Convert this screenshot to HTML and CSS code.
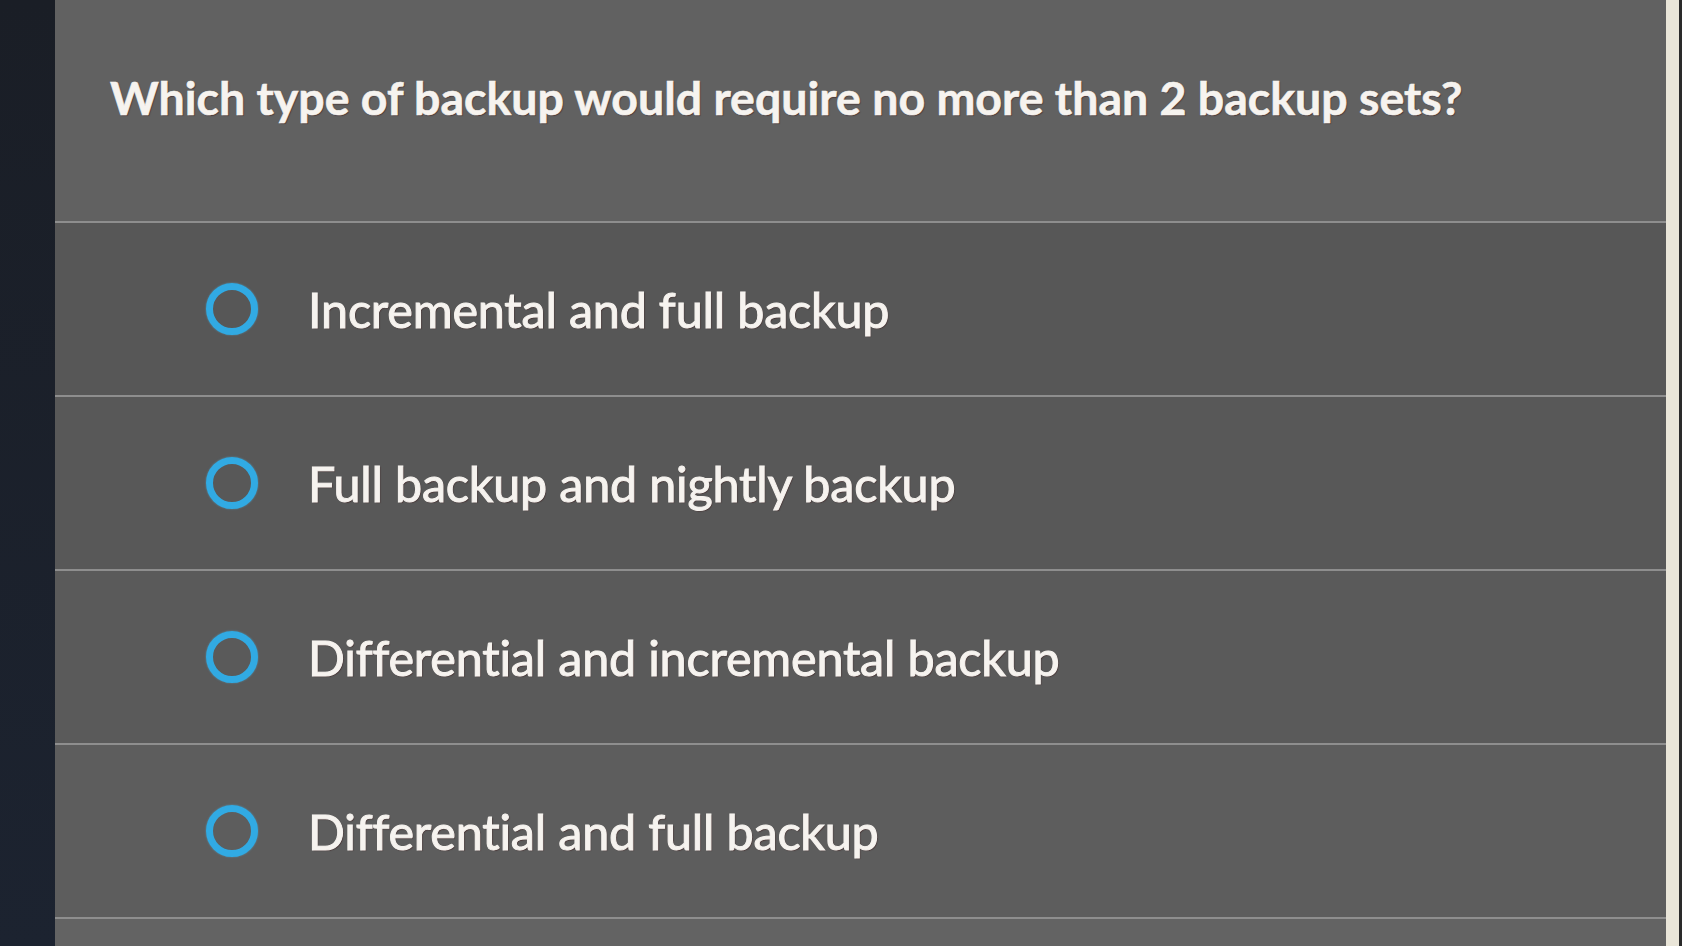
FILE: index.html
```html
<!DOCTYPE html>
<html lang="en">
<head>
<meta charset="utf-8">
<title>Backup question</title>
<link rel="stylesheet" href="styles.css">
</head>
<body>
<div class="screen">
  <div class="bezel-left"></div>
  <main class="quiz">
    <header class="question">
      <h1 class="question-text">Which type of backup would require no more than 2 backup sets?</h1>
    </header>
    <ul class="options">
      <li class="option option-1"><span class="radio"></span><span class="label">Incremental and full backup</span></li>
      <li class="option option-2"><span class="radio"></span><span class="label">Full backup and nightly backup</span></li>
      <li class="option option-3"><span class="radio"></span><span class="label">Differential and incremental backup</span></li>
      <li class="option option-4"><span class="radio"></span><span class="label">Differential and full backup</span></li>
      <li class="option option-rest"></li>
    </ul>
  </main>
  <div class="bezel-right"></div>
</div>
</body>
</html>
```

FILE: styles.css
```css
* { box-sizing: border-box; }
html, body {
  margin: 0;
  padding: 0;
  width: 1682px;
  height: 946px;
  overflow: hidden;
  background: #1b2029;
}
.screen {
  display: flex;
  width: 1682px;
  height: 946px;
}
.bezel-left {
  width: 55px;
  flex: none;
  background: linear-gradient(180deg, #1a1e26 0%, #1c2330 100%);
}
.bezel-right {
  width: 16px;
  flex: none;
  background: #e9e5d8;
  border-right: 3px solid #2a2a2a;
}
.quiz {
  flex: 1;
  display: flex;
  flex-direction: column;
  background: #5c5c5c;
  font-family: Lato, "Open Sans", "Liberation Sans", sans-serif;
  color: #f6f3ef;
}
.question {
  height: 221px;
  flex: none;
  display: flex;
  align-items: center;
  padding: 0 0 28px 55px;
  background: #616161;
}
.question-text {
  margin: 0;
  font-size: 46.5px;
  font-weight: 700;
  letter-spacing: 0;
  -webkit-text-stroke: 0.6px #f6f3ef;
  text-shadow: 1px 1px 1px rgba(60, 30, 30, 0.6);
}
.options {
  list-style: none;
  margin: 0;
  padding: 0;
  flex: 1;
  display: flex;
  flex-direction: column;
}
.option {
  height: 174px;
  flex: none;
  display: flex;
  align-items: center;
  gap: 50px;
  padding-left: 151px;
  border-top: 2px solid #8e8e8e;
  background: #575757;
}
.option-1 { background: #575757; }
.option-2 { background: #585858; }
.option-3 { background: #5a5a5a; }
.option-4 { background: #5d5d5d; }
.option-rest {
  flex: 1;
  height: auto;
  background: #636363;
}
.radio {
  width: 52px;
  height: 52px;
  flex: none;
  border-radius: 50%;
  border: 7px solid #31aae3;
  box-shadow: 0 0 2px rgba(80, 190, 240, 0.6);
}
.label {
  font-size: 48.5px;
  font-weight: 400;
  letter-spacing: -0.2px;
  -webkit-text-stroke: 1px #f6f3ef;
  text-shadow: 1px 1px 1px rgba(60, 30, 30, 0.6);
}
```
